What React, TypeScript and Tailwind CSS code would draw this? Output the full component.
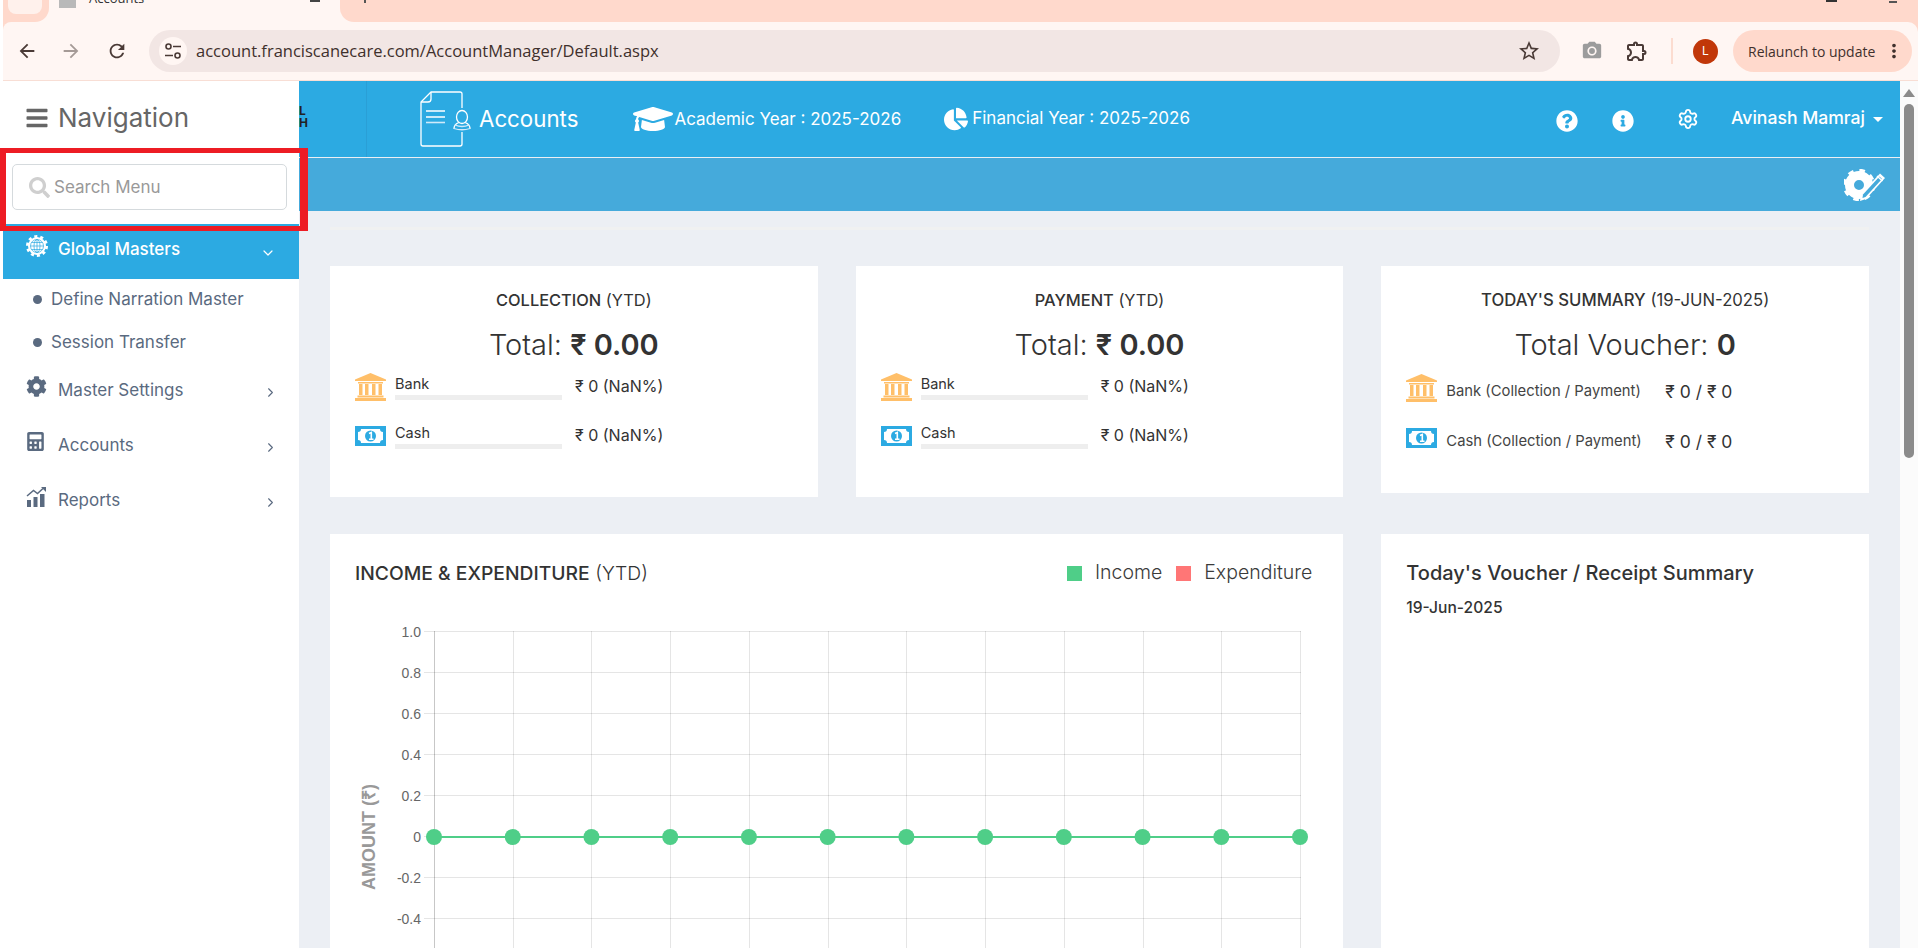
import { ReactNode } from "react";
import {
  FaBars,
  FaCalculator,
  FaChartPie,
  FaCog,
  FaGraduationCap,
  FaInfoCircle,
  FaQuestionCircle,
  FaSearch,
} from "react-icons/fa";
import {
  MdArrowBack,
  MdArrowForward,
  MdMoreVert,
  MdOutlineExtension,
  MdPhotoCamera,
  MdRefresh,
  MdStarBorder,
} from "react-icons/md";
import { ChevronDown, ChevronRight, Settings } from "lucide-react";

const BankIcon = () => (
  <svg width="31" height="28" viewBox="0 0 31 28" fill="#ffbf69">
    <path d="M15.5 0 31 6.5V8H0V6.5Z" />
    <rect x="3" y="9" width="25" height="1.5" />
    <rect x="4" y="11" width="3.5" height="11" />
    <rect x="10" y="11" width="3.5" height="11" />
    <rect x="17" y="11" width="3.5" height="11" />
    <rect x="23.5" y="11" width="3.5" height="11" />
    <rect x="2.5" y="22.5" width="26" height="2" />
    <rect x="0" y="25" width="31" height="3" />
  </svg>
);

const CashIcon = () => (
  <svg width="31" height="20" viewBox="0 0 31 20">
    <rect width="31" height="20" fill="#2caae2" />
    <path d="M6 3h19q0 3 3 3v8q-3 0-3 3H6q0-3-3-3V6q3 0 3-3Z" fill="#fff" />
    <circle cx="15.5" cy="10" r="5.5" fill="#2caae2" />
    <path d="M14 7.5 16.3 6.5V13M14 13.2h4.5" stroke="#fff" strokeWidth="1.6" fill="none" />
  </svg>
);

const DocIcon = () => (
  <svg width="52" height="56" viewBox="0 0 52 56" fill="none" stroke="#fff" strokeWidth="1.3">
    <path d="M42 17V3q0-2-2-2H11L1 11v42q0 2 2 2h37q2 0 2-2V41" strokeLinejoin="round" />
    <path d="M11 1v7q0 3-3 3H1" />
    <path d="M6 20h19M6 26h19" />
    <path d="M6 31.5h19" stroke="#cfeafa" strokeWidth="1.6" />
    <ellipse cx="42" cy="26" rx="5.5" ry="6.5" />
    <path d="M34 38q0-5 5-6.500M50 38q0-5-5-6.500" />
    <path d="M35 34q7 3 14 0M34 37.500q8 2.500 16 0" stroke="#cfeafa" />
  </svg>
);

const SiteIcon = () => (
  <svg width="18" height="18" viewBox="0 0 18 18" fill="none" stroke="#4a3a36" strokeWidth="1.6">
    <circle cx="4.500" cy="4.500" r="2.500" />
    <path d="M9 4.500h8M1 13.500h8" />
    <circle cx="13.500" cy="13.500" r="2.500" />
  </svg>
);

const GlobeGear = () => (
  <svg width="22" height="22" viewBox="0 0 22 22">
    <circle cx="11" cy="11" r="9" fill="#fff" />
    <circle cx="11" cy="11" r="9.5" fill="none" stroke="#fff" strokeWidth="3" strokeDasharray="3 2.97" />
    <g fill="none" stroke="#2caae2" strokeWidth="0.7">
      <circle cx="11" cy="11" r="6.5" />
      <ellipse cx="11" cy="11" rx="3" ry="6.5" />
      <path d="M4.5 11h13M5.5 7.5h11M5.5 14.500h11M11 4.500v13" />
    </g>
  </svg>
);

const ReportsIcon = () => (
  <svg width="22" height="20" viewBox="0 0 22 20" fill="#5a6a80">
    <rect x="1" y="13" width="4" height="7" />
    <rect x="7.500" y="10" width="4" height="10" />
    <rect x="14" y="7" width="4.500" height="13" />
    <path d="M1 9 7.500 3.500l4 3L17 1.500" fill="none" stroke="#5a6a80" strokeWidth="1.500" />
    <path d="M15 0h5v5Z" />
  </svg>
);

const GearPencil = () => (
  <svg width="42" height="32" viewBox="0 0 42 32">
    <circle cx="15" cy="16" r="9.500" fill="none" stroke="#fff" strokeWidth="9" />
    <circle cx="15" cy="16" r="14.500" fill="none" stroke="#fff" strokeWidth="3.500" strokeDasharray="5.500 5.880" />
    <path d="M36 4.500 41 9 22 30l-6 2 1-7Z" fill="#fff" />
    <path d="M35.500 7.500 38 10 21.500 28l-3 1 .5-3.500Z" fill="#45aadb" />
    <path d="M33 7l5.500 5" stroke="#fff" strokeWidth="1.500" />
  </svg>
);

const StatRow = ({ icon, label, value }: { icon: ReactNode; label: string; value: string }) => (
  <div className="flex h-[28px] items-start pl-[25px]">
    <div className="flex h-[28px] w-[31px] items-center">{icon}</div>
    <div className="ml-[9px] w-[167px]">
      <div className="h-[22px] text-[14.500px] leading-[22px] text-[#333]">{label}</div>
      <div className="h-[5px] bg-[#eeeeee]" />
    </div>
    <div className="ml-[13px] text-[16px] leading-[26px] text-[#333]">{value}</div>
  </div>
);

const SummaryRow = ({ icon, label }: { icon: ReactNode; label: string }) => (
  <div className="flex h-[28px] items-start pl-[25px]">
    <div className="flex h-[28px] w-[31px] items-center">{icon}</div>
    <div className="ml-[9px] w-[219px] text-[14.800px] leading-[34px] text-[#444]">{label}</div>
    <div className="text-[17.500px] leading-[36px] text-[#333]">₹ 0 / ₹ 0</div>
  </div>
);

const TotalCard = ({ title, note }: { title: string; note: string }) => (
  <div className="h-[231px] bg-white pt-[24px]">
    <div className="text-center text-[16.400px] leading-[20px] text-[#333]">
      <span className="font-medium">{title}</span> {note}
    </div>
    <div className="mt-[15px] text-center text-[29px] leading-[40px] font-light text-[#333]">
      Total: <span className="font-semibold">₹ 0.00</span>
    </div>
    <div className="mt-[8px] flex flex-col gap-[21px]">
      <StatRow icon={<BankIcon />} label="Bank" value="₹ 0 (NaN%)" />
      <StatRow icon={<CashIcon />} label="Cash" value="₹ 0 (NaN%)" />
    </div>
  </div>
);

const yTicks = ["1.0", "0.8", "0.6", "0.4", "0.2", "0", "-0.2", "-0.4"];
const points = Array.from({ length: 12 }, (_, i) => 104 + i * 78.73);

const Chart = () => (
  <svg width="1013" height="340" viewBox="0 0 1013 340" className="mt-[25px] block">
    {yTicks.map((t, i) => {
      const y = 21.500 + i * 41;
      return (
        <g key={t}>
          <line x1="94" x2="971" y1={y} y2={y} stroke="#000" strokeOpacity="0.1" />
          <text
            x="91"
            y={y + 5}
            textAnchor="end"
            fontSize="14"
            fontFamily="'Liberation Sans', sans-serif"
            fill="#666"
          >
            {t}
          </text>
        </g>
      );
    })}
    {points.map((x, i) => (
      <line
        key={x}
        x1={Math.round(x) + 0.5}
        x2={Math.round(x) + 0.5}
        y1="21"
        y2="340"
        stroke="#000"
        strokeOpacity={i === 0 ? 0.22 : 0.1}
      />
    ))}
    <text
      transform="translate(45 227) rotate(-90)"
      textAnchor="middle"
      fontSize="18"
      fontWeight="700"
      fontFamily="'Liberation Sans', sans-serif"
      fill="#999"
    >
      AMOUNT (₹)
    </text>
    <line x1={points[0]} x2={points[11]} y1="227" y2="227" stroke="#4fce88" strokeWidth="2" />
    {points.map((x) => (
      <circle key={x} cx={x} cy="227" r="8" fill="#4fce88" />
    ))}
  </svg>
);

const SideItem = ({ icon, label }: { icon: ReactNode; label: string }) => (
  <div className="flex h-[55px] items-center pr-[21px] pl-[23px] text-[#5a6a80]">
    <div className="mb-[6px] flex w-[32px] items-center justify-start">{icon}</div>
    <span className="pt-[2px] text-[17px]">{label}</span>
    <ChevronRight className="mt-[5px] ml-auto h-[15px] w-[15px]" strokeWidth={1.8} />
  </div>
);

const SubItem = ({ label }: { label: string }) => (
  <div className="flex h-[40px] items-center pl-[30px] text-[17px] text-[#5a6a80]">
    <span className="mr-[9px] h-[9px] w-[9px] rounded-full bg-[#5a6a80]" />
    <span className="pt-[2px]">{label}</span>
  </div>
);

export default function App() {
  return (
    <div className="relative flex h-[948px] w-full flex-col overflow-hidden bg-white [font-family:Inter,sans-serif]">
      {/* browser chrome */}
      <div className="ml-[3px] flex h-[22px] overflow-hidden bg-[#fff6f3]">
        <div className="w-[46px] rounded-br-[14px] bg-[#ffd9cc] pl-[5px]">
          <div className="h-[14px] w-[34px] rounded-b-[8px] bg-[#fff1ec]" />
        </div>
        <div className="flex h-[22px] w-[291px] items-start pl-[10px]">
          <div className="h-[8px] w-[17px] bg-[#b9b9b9]" />
          <span className="mt-[-11px] ml-[13px] text-[13px] leading-[18px] text-[#333] [font-family:'Open_Sans',sans-serif]">
            Accounts
          </span>
          <span className="mt-[-4px] mr-[20px] ml-auto h-[6px] w-[10px] border-b-2 border-[#444]" />
        </div>
        <div className="flex flex-1 rounded-bl-[14px] bg-[#ffd9cc] pl-[24px]">
          <div className="h-[3px] w-[2px] bg-[#555]" />
          <div className="mr-[52px] ml-auto h-[2px] w-[11px] border-x-2 border-b-2 border-[#333]" />
          <div className="mr-[21px] h-[3px] w-[8px] border-b-2 border-[#555]" />
        </div>
      </div>
      <div className="ml-[3px] bg-[#ffd9cc]">
        <div className="flex h-[59px] items-center rounded-tl-[8px] rounded-tr-[10px] border-b border-[#f8ded5] bg-[#fff6f3] text-[#4a3a36]">
          <MdArrowBack className="ml-[13px] text-[22px]" />
          <MdArrowForward className="ml-[22px] text-[22px] text-[#a59a96]" />
          <MdRefresh className="ml-[24px] text-[22px]" />
          <div className="ml-[21px] flex h-[42px] w-[1411px] items-center rounded-full bg-[#f2e6e4] pr-[19px] pl-[10px]">
            <div className="flex h-[28px] w-[28px] items-center justify-center rounded-full bg-[#fff6f3]">
              <SiteIcon />
            </div>
            <span className="ml-[9px] text-[16.500px] text-[#3f302c] [font-family:'Open_Sans',sans-serif]">
              account.franciscanecare.com/AccountManager/Default.aspx
            </span>
            <MdStarBorder className="ml-auto text-[24px]" />
          </div>
          <MdPhotoCamera className="ml-[21px] text-[22px] text-[#9c9c9c]" />
          <MdOutlineExtension className="ml-[22px] text-[24px]" />
          <div className="ml-[22px] h-[26px] w-[2px] bg-[#fcdcd0]" />
          <div className="ml-[20px] flex h-[25px] w-[25px] items-center justify-center rounded-full bg-[#c13709] text-[12px] text-white">
            L
          </div>
          <div className="ml-[15px] flex h-[42px] w-[179px] items-center rounded-full bg-[#ffd9cc] pl-[15px] text-[#3f302c]">
            <span className="text-[14px] [font-family:'Open_Sans',sans-serif]">Relaunch to update</span>
            <MdMoreVert className="mr-[7px] ml-auto text-[22px]" />
          </div>
        </div>
      </div>

      <div className="flex min-h-0 flex-1">
        {/* sidebar */}
        <aside className="z-10 w-[299px] shrink-0 bg-white pl-[3px]">
          <div className="flex h-[73px] items-center pl-[22px] text-[#666]">
            <FaBars className="text-[24px]" />
            <span className="ml-[9px] text-[26px]">Navigation</span>
          </div>
          <div className="mt-[10px] ml-[9px] flex h-[46px] w-[275px] items-center rounded-[5px] border border-[#d5dadd] pl-[16px] text-[#999]">
            <FaSearch className="text-[21px] text-[#cfcfcf]" />
            <span className="ml-[4px] pt-[2px] text-[17px]">Search Menu</span>
          </div>
          <div className="mt-[14px] flex h-[55px] items-center bg-[#2caae2] pr-[23px] pl-[23px] text-white">
            <div className="mb-[11px] w-[32px]">
              <GlobeGear />
            </div>
            <span className="mb-[3px] text-[17px] font-medium">Global Masters</span>
            <ChevronDown className="mt-[2px] ml-auto h-[16px] w-[16px]" strokeWidth={1.8} />
          </div>
          <SubItem label="Define Narration Master" />
          <div className="mt-[3px]">
            <SubItem label="Session Transfer" />
          </div>
          <SideItem icon={<FaCog className="text-[21px]" />} label="Master Settings" />
          <SideItem icon={<FaCalculator className="text-[19px]" />} label="Accounts" />
          <SideItem icon={<ReportsIcon />} label="Reports" />
        </aside>

        {/* page */}
        <main className="flex min-w-0 flex-1 flex-col bg-[#eceff4]">
          <header className="flex h-[76px] shrink-0 items-center bg-[#2caae2] text-white">
            <div className="flex h-[76px] w-[68px] flex-col justify-center border-r border-[#2a9fd6] pb-[4px] text-[12px] leading-[12px] font-bold text-[#222]">
              <span>L</span>
              <span>H</span>
            </div>
            <div className="ml-[53px]">
              <DocIcon />
            </div>
            <span className="ml-[7px] text-[22.300px]">Accounts</span>
            <FaGraduationCap className="ml-[55px] text-[40px]" />
            <span className="ml-[1px] pt-[2px] text-[17px]">Academic Year : 2025-2026</span>
            <FaChartPie className="ml-[43px] text-[24px]" />
            <span className="ml-[4px] text-[17px]">Financial Year : 2025-2026</span>
            <FaQuestionCircle className="mt-[4px] ml-auto text-[22px]" />
            <FaInfoCircle className="mt-[4px] ml-[34px] text-[22px]" />
            <Settings className="mb-[1px] ml-[43px] h-[22px] w-[22px]" strokeWidth={2} />
            <span className="mb-[2px] ml-[32px] text-[17.600px] font-medium">Avinash Mamraj</span>
            <span className="mr-[17px] ml-[8px] h-0 w-0 border-x-[5px] border-t-[5px] border-x-transparent border-t-white" />
          </header>
          <div className="mt-px flex h-[53px] shrink-0 items-center justify-end bg-[#45aadb] pr-[14px]">
            <GearPencil />
          </div>
          <div className="mx-[31px] mt-[16px] h-[3px] shrink-0 bg-[#f0f1f1]" />
          <div className="grid grid-cols-3 items-start gap-x-[38px] gap-y-[37px] px-[31px] pt-[36px]">
            <TotalCard title="COLLECTION" note="(YTD)" />
            <TotalCard title="PAYMENT" note="(YTD)" />
            <div className="h-[227px] bg-white pt-[24px]">
              <div className="text-center text-[16.700px] leading-[20px] text-[#333]">
                <span className="font-medium">TODAY'S SUMMARY</span> (19-JUN-2025)
              </div>
              <div className="mt-[15px] text-center text-[29px] leading-[40px] font-light text-[#333]">
                Total Voucher: <span className="font-semibold">0</span>
              </div>
              <div className="mt-[9px] flex flex-col gap-[22px]">
                <SummaryRow icon={<BankIcon />} label="Bank (Collection / Payment)" />
                <SummaryRow icon={<CashIcon />} label="Cash (Collection / Payment)" />
              </div>
            </div>

            <div className="col-span-2 h-[500px] bg-white">
              <div className="flex h-[51px] items-end justify-between pr-[31px] pl-[25px]">
                <div className="h-[24px] text-[19.300px] leading-[24px] text-[#333]">
                  <span className="font-medium">INCOME &amp; EXPENDITURE</span>{" "}
                  <span className="font-light">(YTD)</span>
                </div>
                <div className="flex h-[24px] items-center text-[19.500px] font-light text-[#3b3b3b]">
                  <span className="h-[15px] w-[15px] bg-[#4fce88]" />
                  <span className="ml-[13px]">Income</span>
                  <span className="ml-[14px] h-[15px] w-[15px] bg-[#ff7676]" />
                  <span className="ml-[13px]">Expenditure</span>
                </div>
              </div>
              <Chart />
            </div>
            <div className="h-[500px] bg-white px-[25px] pt-[27px]">
              <div className="text-[20px] leading-[24px] font-medium text-[#333]">
                Today's Voucher / Receipt Summary
              </div>
              <div className="mt-[13px] text-[15.600px] leading-[20px] font-medium text-[#333]">19-Jun-2025</div>
            </div>
          </div>
        </main>

        {/* scrollbar */}
        <div className="relative w-[18px] shrink-0 bg-[#fbfbfb]">
          <div className="mx-auto mt-[8px] h-0 w-0 border-x-[6px] border-b-[8px] border-x-transparent border-b-[#8b8b8b]" />
          <div className="mx-auto mt-[7px] h-[354px] w-[10px] rounded-full bg-[#8b8b8b]" />
        </div>
      </div>

      {/* highlight drawn on top of the screenshot */}
      <div className="pointer-events-none absolute top-[148px] left-0 z-20 h-[83px] w-[308px] border-y-[5px] border-r-[8px] border-l-[6px] border-[#ed1c24]" />
    </div>
  );
}
